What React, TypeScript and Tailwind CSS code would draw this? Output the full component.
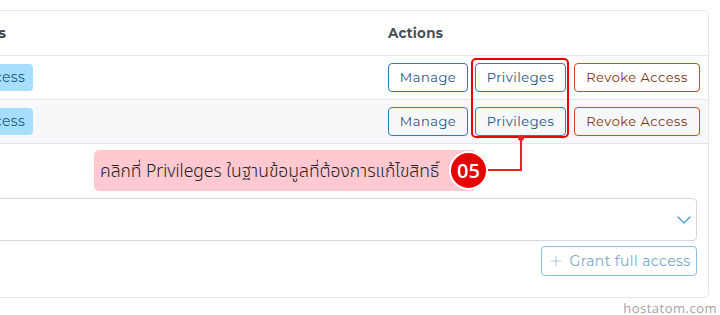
import { ChevronDown, Plus } from 'lucide-react';

const ROWS = [{ striped: false }, { striped: true }];

function ActionButtons() {
  return (
    <div className="flex items-center gap-[7px] tracking-[0.5px]">
      <button
        type="button"
        className="h-[29px] w-[80px] rounded-[4px] border border-[#2a7fb4] text-[13px] text-[#17557f]"
      >
        Manage
      </button>
      <button
        type="button"
        className="h-[29px] w-[91px] rounded-[4px] border border-[#2a7fb4] text-[13px] text-[#17557f]"
      >
        Privileges
      </button>
      <button
        type="button"
        className="ml-px h-[29px] w-[126px] rounded-[4px] border border-[#cf4a14] text-[13px] text-[#7f330f]"
      >
        Revoke Access
      </button>
    </div>
  );
}

export default function App() {
  return (
    <div className="relative h-[315px] w-[720px] overflow-hidden bg-white font-['Montserrat','Open_Sans',sans-serif]">
      <div className="ml-[-100px] mt-[10px] flex h-[288px] w-[809px] flex-col rounded-[5px] border border-[#e4e6ea]">
        {/* table */}
        <div className="grid h-[44px] grid-cols-[480px_1fr] items-center">
          <div className="pl-[19px] text-[13.5px] font-bold text-[#3d4148]">Permissions</div>
          <div className="pl-[7px] text-[13.5px] font-bold tracking-[0.2px] text-[#4a4f57]">Actions</div>
        </div>
        {ROWS.map((r, i) => (
          <div
            key={i}
            className={
              'grid h-[44px] grid-cols-[480px_1fr] items-center border-t border-[#e4e6ea] ' +
              (r.striped ? 'bg-[#f7f8fa]' : 'bg-white')
            }
          >
            <div className="flex pl-[36px]">
              <span className="flex h-[27px] items-center rounded-[4px] bg-[#a6defc] px-[8px] text-[14px] tracking-[0.3px] text-[#1f5e86]">
                Full Access
              </span>
            </div>
            <div className="pl-[7px]">
              <ActionButtons />
            </div>
          </div>
        ))}

        {/* grant section */}
        <div className="flex flex-1 flex-col items-end border-t border-[#e4e6ea] pr-[11px] pt-[54px]">
          <div className="flex h-[43px] w-full items-center justify-end rounded-[4px] border border-[#d3d6de] pr-0">
            <ChevronDown className="h-[24px] w-[24px] text-[#4b9fd6]" strokeWidth={1.4} />
          </div>
          <button
            type="button"
            className="mt-[5px] flex h-[30px] w-[156px] items-center justify-center gap-[6px] rounded-[4px] border border-[#85c2df] text-[14px] tracking-[0.4px] text-[#7ba7c4]"
          >
            <Plus className="h-[16px] w-[16px] text-[#9fbfd4]" strokeWidth={1.25} />
            Grant full access
          </button>
        </div>
      </div>

      {/* annotation */}
      <div className="absolute left-[471px] top-[58px] h-[80px] w-[98px] rounded-[5px] border-2 border-[#ee0000]" />
      <div className="absolute left-[518px] top-[135px] h-[6px] w-[6px] rounded-full bg-[#e8202a]" />
      <div className="absolute left-[520px] top-[138px] h-[32px] w-[2px] bg-[#e8202a]" />
      <div className="absolute left-[486px] top-[169px] h-[2px] w-[36px] bg-[#e8202a]" />
      <div className="absolute left-[94px] top-[150px] flex h-[41px] w-[380px] items-center rounded-l-[5px] bg-[#ffc9cf] pl-[6px] font-['Noto_Sans','Noto_Sans_Thai','Loma',sans-serif] text-[17.5px] font-light text-[#222]">
        คลิกที่ Privileges ในฐานข้อมูลที่ต้องการแก้ไขสิทธิ์
      </div>
      <div className="absolute left-[449px] top-[151px] flex h-[39px] w-[39px] items-center justify-center rounded-full border-[2px] border-white bg-[#e60000] font-['Open_Sans',sans-serif] text-[20px] font-semibold text-white">
        05
      </div>

      <div className="absolute right-[3px] top-[299px] font-['Open_Sans',sans-serif] text-[13px] tracking-[0.5px] text-[#a3a3a3]">
        hostatom.com
      </div>
    </div>
  );
}
